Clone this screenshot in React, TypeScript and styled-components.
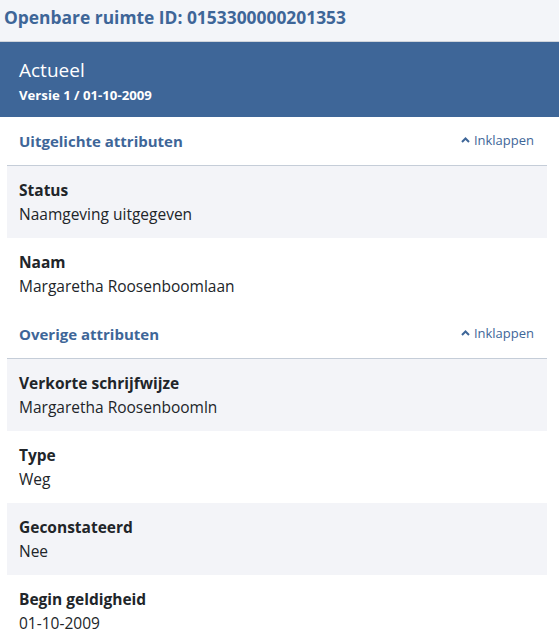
import { FC } from 'react'
import styled, { createGlobalStyle } from 'styled-components'

const GlobalStyle = createGlobalStyle`
  body {
    margin: 0;
    background: #ffffff;
    font-family: 'Open Sans', 'Noto Sans', sans-serif;
    color: #212529;
  }
`

type Attribute = {
  label: string
  value: string
}

type Section = {
  title: string
  attributes: Attribute[]
}

const sections: Section[] = [
  {
    title: 'Uitgelichte attributen',
    attributes: [
      { label: 'Status', value: 'Naamgeving uitgegeven' },
      { label: 'Naam', value: 'Margaretha Roosenboomlaan' }
    ]
  },
  {
    title: 'Overige attributen',
    attributes: [
      { label: 'Verkorte schrijfwijze', value: 'Margaretha Roosenboomln' },
      { label: 'Type', value: 'Weg' },
      { label: 'Geconstateerd', value: 'Nee' },
      { label: 'Begin geldigheid', value: '01-10-2009' }
    ]
  }
]

const ChevronUp: FC = () => (
  <svg width="9" height="6" viewBox="0 0 9 6" aria-hidden="true">
    <path d="M1 5 L4.5 1.5 L8 5" fill="none" stroke="#3e6698" strokeWidth="2" />
  </svg>
)

export default function App() {
  return (
    <>
      <GlobalStyle />
      <StyledPage>
        <StyledTopBar>
          <StyledTopTitle>Openbare ruimte ID: 0153300000201353</StyledTopTitle>
        </StyledTopBar>
        <StyledVersionBand>
          <StyledVersionTitle>Actueel</StyledVersionTitle>
          <StyledVersionSub>Versie 1 / 01-10-2009</StyledVersionSub>
        </StyledVersionBand>
        <StyledContent>
          {sections.map((section) => (
            <div key={section.title}>
              <StyledSectionHeader>
                <StyledSectionTitle>{section.title}</StyledSectionTitle>
                <StyledCollapse href="#">
                  <ChevronUp />
                  Inklappen
                </StyledCollapse>
              </StyledSectionHeader>
              {section.attributes.map((attr, i) => (
                <StyledRow key={attr.label} $striped={i % 2 === 0}>
                  <StyledLabel>{attr.label}</StyledLabel>
                  <StyledValue>{attr.value}</StyledValue>
                </StyledRow>
              ))}
            </div>
          ))}
        </StyledContent>
      </StyledPage>
    </>
  )
}

const StyledPage = styled.div`
  width: 559px;
`

const StyledTopBar = styled.div`
  height: 42px;
  box-sizing: border-box;
  padding: 6px 4px 0;
  background: #f3f5f9;
  border-bottom: 1px solid #cfd4db;
`

const StyledTopTitle = styled.h1`
  margin: 0;
  color: #3e6698;
  font-size: 17.4px;
  font-weight: 700;
  line-height: 22px;
`

const StyledVersionBand = styled.div`
  height: 75px;
  box-sizing: border-box;
  padding: 15px 19px 0;
  background: #3e6698;
  color: #ffffff;
`

const StyledVersionTitle = styled.div`
  font-size: 19px;
  line-height: 26px;
`

const StyledVersionSub = styled.div`
  margin-top: 2px;
  font-size: 13.2px;
  font-weight: 700;
  line-height: 20px;
`

const StyledContent = styled.div`
  margin: 0 12px 0 7px;
`

const StyledSectionHeader = styled.div`
  height: 49px;
  box-sizing: border-box;
  display: flex;
  align-items: center;
  justify-content: space-between;
  padding: 0 13px 0 12px;
  border-bottom: 1px solid #c5cdd8;
`

const StyledSectionTitle = styled.h2`
  margin: 0;
  color: #3e6698;
  font-size: 15px;
  font-weight: 700;
`

const StyledCollapse = styled.a`
  display: flex;
  align-items: center;
  gap: 4px;
  color: #3e6698;
  font-size: 13px;
  text-decoration: none;
  margin-top: -2px;
`

const StyledRow = styled.div<{ $striped: boolean }>`
  height: 72px;
  box-sizing: border-box;
  display: flex;
  flex-direction: column;
  justify-content: center;
  padding: 0 12px;
  background: ${({ $striped }) => ($striped ? '#f3f4f8' : '#ffffff')};
`

const StyledLabel = styled.div`
  font-size: 15.5px;
  font-weight: 700;
  line-height: 24px;
`

const StyledValue = styled.div`
  font-size: 15.5px;
  line-height: 24px;
`
